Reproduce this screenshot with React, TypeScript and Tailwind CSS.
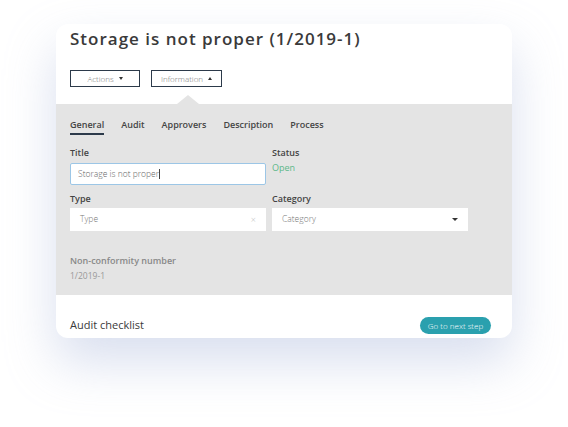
export default function App() {
  const tabs = ["General", "Audit", "Approvers", "Description", "Process"];

  return (
    <div
      className="w-[568px] h-[427px] bg-white overflow-hidden pt-[24px] pl-[56px]"
      style={{ fontFamily: '"Open Sans", "Liberation Sans", sans-serif' }}
    >
      <div className="w-[456px] h-[314px] bg-white rounded-[12px] overflow-hidden shadow-[0_24px_50px_rgba(170,185,220,0.45)] flex flex-col">
        {/* Header */}
        <div className="h-[80px] px-[14px] pt-[3px] relative">
          <h1 className="text-[17px] font-semibold tracking-[1px] text-[#3a3a3a] leading-[24px]">
            Storage is not proper (1/2019-1)
          </h1>
          <div className="flex gap-[11px] mt-[19px]">
            <button className="w-[70px] h-[17px] border-[1.5px] border-[#2c3a4a] flex items-center justify-center gap-[5px] text-[8px] text-[#777] font-light">
              Actions
              <span className="w-0 h-0 border-l-[2.5px] border-r-[2.5px] border-t-[3px] border-l-transparent border-r-transparent border-t-[#333]" />
            </button>
            <button className="w-[71px] h-[17px] border-[1.5px] border-[#2c3a4a] flex items-center justify-center gap-[5px] text-[8px] text-[#777] font-light">
              Information
              <span className="w-0 h-0 border-l-[2.5px] border-r-[2.5px] border-b-[3px] border-l-transparent border-r-transparent border-b-[#333]" />
            </button>
          </div>
          <span className="absolute left-[121px] bottom-0 w-0 h-0 border-l-[11px] border-r-[11px] border-b-[9px] border-l-transparent border-r-transparent border-b-[#e4e4e4]" />
        </div>

        {/* Gray panel */}
        <div className="h-[191px] bg-[#e4e4e4] px-[14px] pt-[14px]">
          <div className="flex gap-[17px] text-[9px] font-semibold text-[#444] leading-[14px]">
            {tabs.map((t, i) => (
              <div key={t} className="flex flex-col">
                <span>{t}</span>
                {i === 0 && <span className="h-[2px] bg-[#2c3a4a] mt-[1px]" />}
              </div>
            ))}
          </div>

          <div className="grid grid-cols-[196px_196px] gap-x-[6px] mt-[11px]">
            <div>
              <div className="text-[9px] font-semibold text-[#444] leading-[14px]">Title</div>
              <div className="mt-[3px] h-[22px] bg-white border border-[#9cc6e6] rounded-[2px] flex items-center px-[7px] text-[8.5px] font-light text-[#666]">
                Storage is not proper<span className="w-px h-[10px] bg-[#444]" />
              </div>
            </div>
            <div>
              <div className="text-[9px] font-semibold text-[#444] leading-[14px]">Status</div>
              <div className="mt-[1px] text-[9px] text-[#5cb88a]">Open</div>
            </div>

            <div className="mt-[7px]">
              <div className="text-[9px] font-semibold text-[#444] leading-[14px]">Type</div>
              <div className="mt-[2px] h-[23px] bg-white flex items-center justify-between px-[10px] text-[8.5px] font-light text-[#777]">
                <span>Type</span>
                <span className="text-[9px] text-[#bbb]">×</span>
              </div>
            </div>
            <div className="mt-[7px]">
              <div className="text-[9px] font-semibold text-[#444] leading-[14px]">Category</div>
              <div className="mt-[2px] h-[23px] bg-white flex items-center justify-between px-[10px] text-[8.5px] font-light text-[#777]">
                <span>Category</span>
                <span className="w-0 h-0 border-l-[3px] border-r-[3px] border-t-[3.5px] border-l-transparent border-r-transparent border-t-[#333]" />
              </div>
            </div>
          </div>

          <div className="mt-[23px] text-[9px] font-semibold text-[#888] leading-[14px]">
            Non-conformity number
          </div>
          <div className="mt-[2px] text-[8.5px] text-[#999]">1/2019-1</div>
        </div>

        {/* Footer */}
        <div className="flex-1 px-[14px] pr-[21px] flex items-end justify-between pb-[4px]">
          <span className="text-[11px] text-[#3a3a3a] leading-[16px] pb-[1px]">Audit checklist</span>
          <button className="w-[71px] h-[17px] rounded-full bg-[#2aa0ae] text-white text-[8px] font-light flex items-center justify-center">
            Go to next step
          </button>
        </div>
      </div>
    </div>
  );
}
